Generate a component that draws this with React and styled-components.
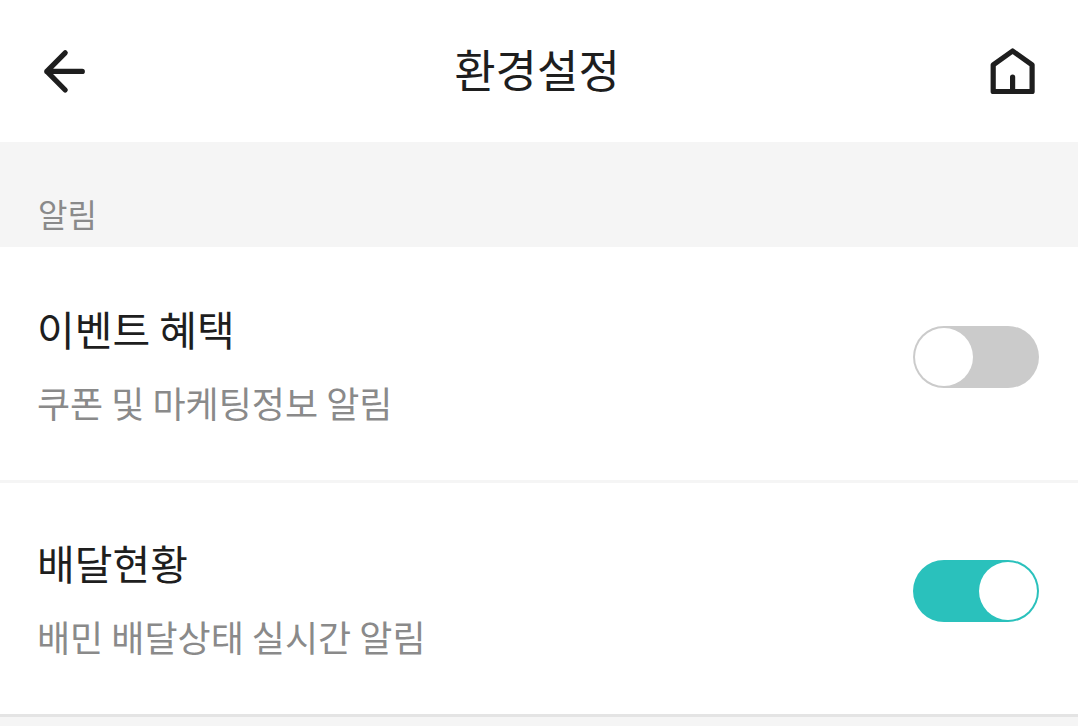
import { useState } from "react";
import styled, { createGlobalStyle } from "styled-components";

const notifications = [
  {
    id: "event",
    title: "이벤트 혜택",
    description: "쿠폰 및 마케팅정보 알림",
    enabled: false,
  },
  {
    id: "delivery",
    title: "배달현황",
    description: "배민 배달상태 실시간 알림",
    enabled: true,
  },
];

function NotificationItem({ id, title, description, enabled }) {
  const [checked, setChecked] = useState(enabled);
  return (
    <Item>
      <Label htmlFor={id}>
        <ItemTitle>{title}</ItemTitle>
        <ItemDescription id={`${id}-desc`}>{description}</ItemDescription>
      </Label>
      <Switch
        id={id}
        type="checkbox"
        role="switch"
        aria-describedby={`${id}-desc`}
        checked={checked}
        onChange={(e) => setChecked(e.target.checked)}
      />
    </Item>
  );
}

export default function App() {
  return (
    <>
      <GlobalStyle />
      <Header>
        <IconButton type="button" aria-label="뒤로">
          <Icon viewBox="0 0 48 48">
            <path d="M27.2 5.8 8.8 24.4 27.2 43M8.8 24.4H44.3" />
          </Icon>
        </IconButton>
        <PageTitle>환경설정</PageTitle>
        <IconButton type="button" aria-label="홈">
          <Icon viewBox="0 0 48 48">
            <path d="M5.2 17.8 24.6 4 44.1 17.8V44.5H5.2ZM24.6 44.5V30" />
          </Icon>
        </IconButton>
      </Header>
      <main>
        <SectionTitle>알림</SectionTitle>
        <List>
          {notifications.map((item) => (
            <NotificationItem key={item.id} {...item} />
          ))}
        </List>
      </main>
    </>
  );
}

const GlobalStyle = createGlobalStyle`
  * {
    box-sizing: border-box;
  }
  body {
    margin: 0;
    background-color: #f5f5f5;
    color: #1e1e1e;
    font-family: "Noto Sans CJK KR", sans-serif;
  }
`;

const Header = styled.header`
  display: flex;
  align-items: center;
  justify-content: space-between;
  padding: 35px 42px 35px 38px;
  background-color: white;
`;

const IconButton = styled.button`
  display: flex;
  border: none;
  padding: 0;
  background-color: transparent;
  color: inherit;
  cursor: pointer;
`;

const Icon = styled.svg`
  width: 48px;
  height: 48px;
  fill: none;
  stroke: currentColor;
  stroke-width: 5.2;
  stroke-linecap: round;
  stroke-linejoin: round;
`;

const PageTitle = styled.h1`
  margin: 0;
  padding-bottom: 4px;
  font-size: 45px;
  font-weight: 400;
  line-height: 68px;
`;

const SectionTitle = styled.h2`
  margin: 0;
  padding: 47px 38px 10px;
  color: #8a8a8a;
  font-size: 32px;
  font-weight: 400;
  line-height: 48px;
`;

const List = styled.ul`
  margin: 0;
  padding: 2px 0 0;
  list-style: none;
  background-color: white;
`;

const Item = styled.li`
  display: flex;
  align-items: flex-start;
  justify-content: space-between;
  padding: 51px 39px 54px 37px;
  border-bottom: 3px solid #f5f5f5;
  &:last-child {
    border-bottom-color: #e4e4e4;
  }
`;

const Label = styled.label`
  display: flex;
  flex-direction: column;
  gap: 22px;
  cursor: pointer;
`;

const ItemTitle = styled.span`
  font-size: 41px;
  line-height: 56px;
`;

const ItemDescription = styled.span`
  color: #8a8a8a;
  font-size: 36px;
  line-height: 48px;
`;

const Switch = styled.input`
  appearance: none;
  display: flex;
  flex-shrink: 0;
  width: 126px;
  height: 62px;
  margin: 26px 0 0;
  padding: 2px;
  border-radius: 31px;
  background-color: #cbcbcb;
  cursor: pointer;
  &::before {
    content: "";
    width: 58px;
    height: 58px;
    border-radius: 50%;
    background-color: white;
  }
  &:checked {
    justify-content: flex-end;
    background-color: #2ac1bc;
  }
`;
